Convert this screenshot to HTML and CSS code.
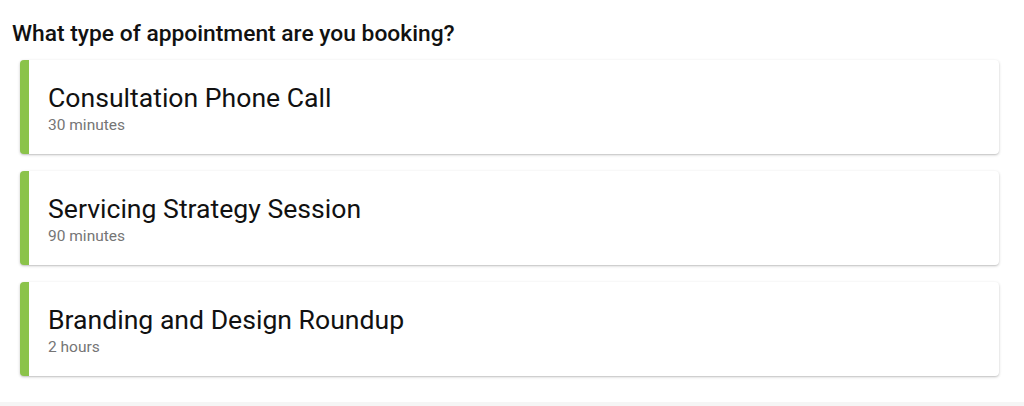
FILE: index.html
```html
<!DOCTYPE html>
<html>
<head>
<meta charset="utf-8">
<link rel="stylesheet" href="styles.css">
</head>
<body>
<div class="page">
  <h2 class="question">What type of appointment are you booking?</h2>
  <div class="list">
    <div class="card">
      <div class="card-title">Consultation Phone Call</div>
      <div class="card-sub">30 minutes</div>
    </div>
    <div class="card">
      <div class="card-title">Servicing Strategy Session</div>
      <div class="card-sub">90 minutes</div>
    </div>
    <div class="card">
      <div class="card-title">Branding and Design Roundup</div>
      <div class="card-sub">2 hours</div>
    </div>
  </div>
</div>
<div class="footer"></div>
</body>
</html>
```

FILE: styles.css
```css
html, body {
  margin: 0;
  padding: 0;
  background: #ffffff;
  font-family: Roboto, "Liberation Sans", Arial, sans-serif;
  color: #111;
}
.page {
  height: 402px;
  box-sizing: border-box;
  padding: 20px 25px 0 20px;
}
.question {
  margin: 0 0 13px -8px;
  font-size: 22.8px;
  font-weight: 500;
  line-height: 27px;
  color: #111;
}
.list {
  display: flex;
  flex-direction: column;
  gap: 17px;
}
.card {
  height: 94px;
  box-sizing: border-box;
  background: #fff;
  border-left: 9px solid #8bc34a;
  border-radius: 4px;
  box-shadow: 0 1px 3px rgba(0,0,0,0.22), 0 1px 1px rgba(0,0,0,0.06);
  padding: 21.5px 18px 0 19px;
}
.card-title {
  font-size: 26.6px;
  line-height: 32px;
  color: #111;
}
.card-sub {
  margin-top: 1px;
  font-size: 15.5px;
  line-height: 20px;
  color: #757575;
}
.footer {
  height: 4px;
  background: #f5f5f5;
}
```
